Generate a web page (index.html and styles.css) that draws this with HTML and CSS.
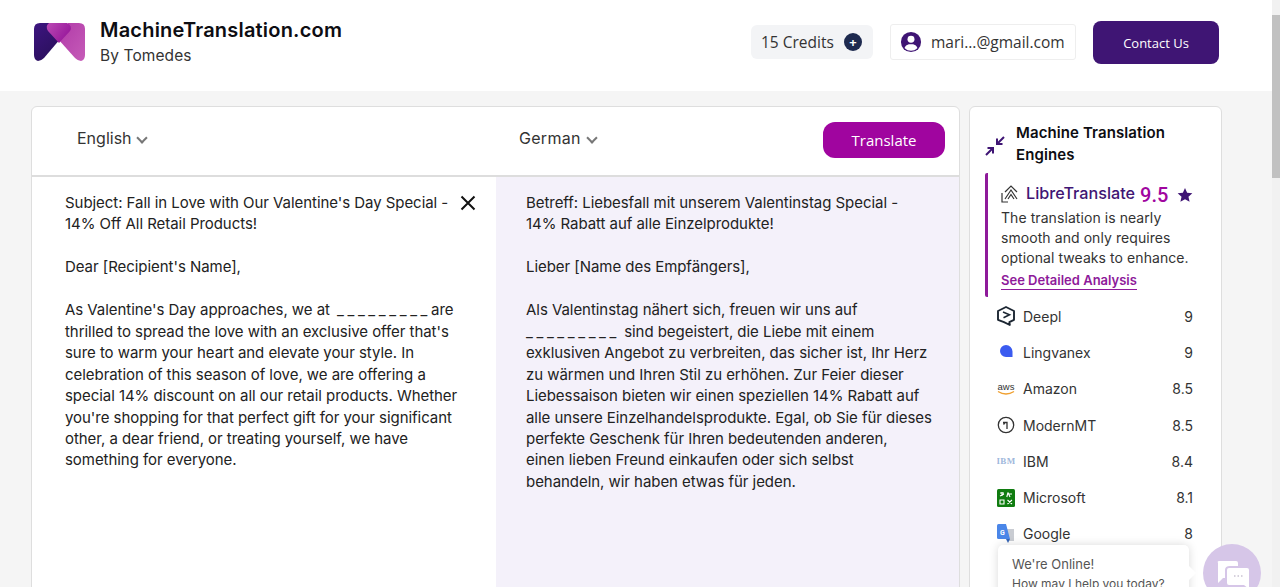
FILE: index.html
```html
<!DOCTYPE html>
<html lang="en">
<head>
  <meta charset="UTF-8">
  <title>MachineTranslation.com</title>
  <link rel="stylesheet" href="styles.css">
</head>
<body>
  <div class="page">
    <header class="topbar">
      <div class="brand">
        <svg class="logo" viewBox="0 0 51 38" width="51" height="38">
          <defs>
            <linearGradient id="logoDark" x1="0" y1="0" x2="0.6" y2="1">
              <stop offset="0" stop-color="#3d1580"/>
              <stop offset="1" stop-color="#2a0f5c"/>
            </linearGradient>
            <linearGradient id="logoPink" x1="0" y1="0" x2="1" y2="1">
              <stop offset="0" stop-color="#b03aa8"/>
              <stop offset="1" stop-color="#c65cb8"/>
            </linearGradient>
            <linearGradient id="logoHeart" x1="0" y1="0" x2="1" y2="0.6">
              <stop offset="0" stop-color="#bb4ab4"/>
              <stop offset="1" stop-color="#96169a"/>
            </linearGradient>
          </defs>
          <path d="M6 0H16L27 15L10 35Q7 38 4 38Q0 37 0 32V6Q0 0 6 0Z" fill="url(#logoDark)"/>
          <path d="M34 0H45Q51 0 51 6V32Q51 37 47 38Q44 38 41 35L24 16Z" fill="url(#logoPink)"/>
          <path d="M15 0H33Q39 3 36 8L25 20L14 8Q11 3 15 0Z" fill="url(#logoHeart)"/>
        </svg>
        <div class="brand-text">
          <div class="brand-name">MachineTranslation.com</div>
          <div class="brand-by">By Tomedes</div>
        </div>
      </div>
      <div class="account">
        <div class="credits">
          <span>15 Credits</span>
          <span class="credits-plus">+</span>
        </div>
        <div class="user">
          <svg viewBox="0 0 24 24" width="22" height="22">
            <circle cx="12" cy="12" r="11" fill="#3f1574"/>
            <circle cx="12" cy="9" r="3.8" fill="#fff"/>
            <path d="M5 18.5C6.5 15 9 14.5 12 14.5S17.5 15 19 18.5C17 20.8 14.5 21.5 12 21.5S7 20.8 5 18.5Z" fill="#fff"/>
          </svg>
          <span>mari...@gmail.com</span>
        </div>
        <button class="contact">Contact Us</button>
      </div>
    </header>

    <main class="content">
      <section class="translator">
        <div class="toolbar">
          <div class="lang-from">English <span class="chevron"></span></div>
          <div class="lang-to">German <span class="chevron"></span></div>
          <button class="translate">Translate</button>
        </div>
        <div class="panels">
          <div class="panel source">
            <p>Subject: Fall in Love with Our Valentine's Day Special -<br>14% Off All Retail Products!</p>
            <p>Dear [Recipient's Name],</p>
            <p>As Valentine's Day approaches, we at <span class="blank">_________</span>are<br>thrilled to spread the love with an exclusive offer that's<br>sure to warm your heart and elevate your style. In<br>celebration of this season of love, we are offering a<br>special 14% discount on all our retail products. Whether<br>you're shopping for that perfect gift for your significant<br>other, a dear friend, or treating yourself, we have<br>something for everyone.</p>
            <svg class="clear" viewBox="0 0 16 16" width="16" height="16">
              <path d="M1.5 1.5L14.5 14.5M14.5 1.5L1.5 14.5" stroke="#111" stroke-width="2" fill="none"/>
            </svg>
          </div>
          <div class="panel target">
            <p>Betreff: Liebesfall mit unserem Valentinstag Special -<br>14% Rabatt auf alle Einzelprodukte!</p>
            <p>Lieber [Name des Empfängers],</p>
            <p>Als Valentinstag nähert sich, freuen wir uns auf<br><span class="blank">_________</span> sind begeistert, die Liebe mit einem<br>exklusiven Angebot zu verbreiten, das sicher ist, Ihr Herz<br>zu wärmen und Ihren Stil zu erhöhen. Zur Feier dieser<br>Liebessaison bieten wir einen speziellen 14% Rabatt auf<br>alle unsere Einzelhandelsprodukte. Egal, ob Sie für dieses<br>perfekte Geschenk für Ihren bedeutenden anderen,<br>einen lieben Freund einkaufen oder sich selbst<br>behandeln, wir haben etwas für jeden.</p>
          </div>
        </div>
      </section>

      <aside class="engines">
        <div class="engines-head">
          <svg viewBox="0 0 20 20" width="20" height="20">
            <path d="M19 1L12 8M12 2.5V8H17.5M1 19L8 12M2.5 12H8V17.5" stroke="#3f1574" stroke-width="2" fill="none"/>
          </svg>
          <h2>Machine Translation<br>Engines</h2>
        </div>
        <div class="best">
          <div class="best-top">
            <svg viewBox="0 0 18 18" width="18" height="18">
              <path d="M1 8V17H7M4 14L10 5L16 14M7 14L10 9.5L13 14M4 7L10 1L16 7" stroke="#333" stroke-width="1.2" fill="none"/>
            </svg>
            <span class="best-name">LibreTranslate</span>
            <span class="best-score">9.5</span>
            <svg class="star" viewBox="0 0 24 24" width="16" height="16">
              <path d="M12 1.5L15.2 8.6L23 9.4L17.2 14.6L18.9 22.3L12 18.3L5.1 22.3L6.8 14.6L1 9.4L8.8 8.6Z" fill="#3f1574"/>
            </svg>
          </div>
          <p>The translation is nearly<br>smooth and only requires<br>optional tweaks to enhance.</p>
          <a class="analysis" href="#">See Detailed Analysis</a>
        </div>
        <ul class="engine-list">
          <li>
            <svg viewBox="0 0 18 20" width="18" height="20">
              <path d="M9 1L17 5V13.8L12.4 16.2L12.8 19L7 16.2L1 13.8V5Z" stroke="#1d2733" stroke-width="1.9" fill="none" stroke-linejoin="round"/>
              <path d="M6 6L12.5 8.8L6.5 11.8" stroke="#1d2733" stroke-width="1.6" fill="none"/>
            </svg>
            <span class="engine-name">Deepl</span><span class="engine-score">9</span>
          </li>
          <li>
            <svg viewBox="0 0 18 18" width="18" height="18">
              <path d="M9 2A6.5 6.5 0 0 1 15.5 8.5V14H9A6 6 0 0 1 9 2Z" fill="#3b5bf0"/>
            </svg>
            <span class="engine-name">Lingvanex</span><span class="engine-score">9</span>
          </li>
          <li>
            <svg viewBox="0 0 18 18" width="18" height="18">
              <text x="9" y="9.5" text-anchor="middle" class="aws-text">aws</text>
              <path d="M1 11.5Q9 16.5 17 11.5" stroke="#f0a030" stroke-width="1.4" fill="none"/>
            </svg>
            <span class="engine-name">Amazon</span><span class="engine-score">8.5</span>
          </li>
          <li>
            <svg viewBox="0 0 18 18" width="18" height="18">
              <circle cx="9" cy="9" r="7.7" stroke="#333" stroke-width="1.3" fill="none"/>
              <path d="M6 6.5H10V13M8 6.5L6.5 8.5" stroke="#333" stroke-width="1.3" fill="none"/>
            </svg>
            <span class="engine-name">ModernMT</span><span class="engine-score">8.5</span>
          </li>
          <li>
            <svg viewBox="0 0 18 18" width="18" height="18">
              <text x="9" y="12" text-anchor="middle" class="ibm-text">IBM</text>
            </svg>
            <span class="engine-name">IBM</span><span class="engine-score">8.4</span>
          </li>
          <li>
            <svg viewBox="0 0 18 18" width="18" height="18">
              <rect width="18" height="18" rx="1.5" fill="#107c10"/>
              <path d="M3 4H7M5 3V7M3 7L7 5M11 3.5L9.8 8M11 3.5L13 8M11 5H15M3 11H7V15H3ZM10.5 11L15 15M15 11L10.5 15" stroke="#fff" stroke-width="1.1" fill="none"/>
            </svg>
            <span class="engine-name">Microsoft</span><span class="engine-score">8.1</span>
          </li>
          <li>
            <svg viewBox="0 0 18 20" width="18" height="20">
              <path d="M9 5H17V17H11Z" fill="#c9ccd2"/>
              <path d="M1.5 0H9L13 15H1.5Q0 15 0 13.5V1.5Q0 0 1.5 0Z" fill="#4a86e8"/>
              <path d="M9 15H13L11 19Z" fill="#3465b8"/>
              <text x="5.5" y="10.5" text-anchor="middle" class="g-text">G</text>
            </svg>
            <span class="engine-name">Google</span><span class="engine-score">8</span>
          </li>
        </ul>
      </aside>
    </main>
  </div>
  <div class="scrollbar"><div class="scroll-thumb"></div></div>

  <div class="chat-popup">
    <div class="chat-title">We're Online!</div>
    <div class="chat-sub">How may I help you today?</div>
  </div>
  <div class="chat-button">
    <svg viewBox="0 0 34 30" width="34" height="30">
      <path d="M3 1H20Q22 1 22 3V6H14Q9 6 9 10V18H7L2 23V3Q1 1 3 1Z" fill="#fff"/>
      <path d="M13 8H31Q33 8 33 10V24L33 29L28 25H13Q11 25 11 23V10Q11 8 13 8Z" fill="#fff"/>
      <path d="M18 16H19.5M21.5 16H23M25 16H26.5" stroke="#c9c2d2" stroke-width="1.4" fill="none"/>
    </svg>
  </div>
</body>
</html>
```

FILE: styles.css
```css
* {
  box-sizing: border-box;
}

body {
  margin: 0;
  height: 587px;
  overflow: hidden;
  display: flex;
  font-family: Inter, sans-serif;
  background-color: #f5f5f5;
  color: #222;
}

.page {
  flex: 1;
  min-width: 0;
}

/* header */
.topbar {
  height: 91px;
  background-color: #fff;
  display: flex;
  justify-content: space-between;
  align-items: center;
  padding: 0 53px 0 34px;
}

.brand {
  display: flex;
  align-items: center;
  gap: 15px;
}

.logo {
  margin-top: -8px;
}

.brand-name {
  font-size: 20px;
  font-weight: 600;
  line-height: 26px;
  letter-spacing: 0.2px;
  color: #0d0d12;
  margin-top: -5px;
}

.brand-by {
  font-size: 15.5px;
  line-height: 26px;
  letter-spacing: 0.1px;
  color: #333;
}

.account {
  display: flex;
  align-items: center;
  font-family: "Open Sans", sans-serif;
  margin-top: -6px;
}

.credits {
  width: 122px;
  height: 34px;
  margin-bottom: 2px;
  background-color: #f3f4f6;
  border-radius: 6px;
  display: flex;
  align-items: center;
  gap: 10px;
  padding-left: 10px;
  font-size: 15.5px;
  color: #333;
}

.credits-plus {
  width: 18px;
  height: 18px;
  border-radius: 50%;
  background-color: #1e2a4f;
  color: #fff;
  font-size: 13px;
  font-weight: 700;
  line-height: 18px;
  text-align: center;
}

.user {
  width: 186px;
  height: 36px;
  margin: 0 0 2px 17px;
  border: 1px solid #eee;
  border-radius: 3px;
  display: flex;
  align-items: center;
  gap: 9px;
  padding-left: 9px;
  font-size: 15.5px;
  color: #333;
}

.contact {
  width: 126px;
  height: 43px;
  margin-left: 17px;
  border: none;
  border-radius: 8px;
  background-color: #3f1574;
  color: #fff;
  font-family: "Open Sans", sans-serif;
  font-size: 13px;
  font-weight: 500;
}

/* main area */
.content {
  display: flex;
  align-items: flex-start;
  gap: 9px;
  padding: 15px 0 0 31px;
}

.translator {
  width: 929px;
  height: 500px;
  background-color: #fff;
  border: 1px solid #dedede;
  border-radius: 6px;
  overflow: hidden;
}

.toolbar {
  height: 70px;
  border-bottom: 2px solid #ddd;
  display: flex;
  align-items: center;
  padding-left: 45px;
  font-size: 16px;
  color: #333;
}

.lang-from {
  width: 442px;
  margin-top: -7px;
}

.lang-to {
  width: 304px;
  margin-top: -7px;
  letter-spacing: 0.3px;
}

.chevron {
  display: inline-block;
  width: 8px;
  height: 8px;
  margin: 0 2px 2px 2px;
  border-right: 2px solid #777;
  border-bottom: 2px solid #777;
  transform: rotate(45deg);
}

.translate {
  width: 122px;
  height: 36px;
  margin-top: -2px;
  border: none;
  border-radius: 12px;
  background-color: #a0059f;
  color: #fff;
  font-family: "Open Sans", sans-serif;
  font-size: 15px;
}

.panels {
  display: flex;
  height: 430px;
}

.panel {
  position: relative;
  padding-top: 15px;
  font-size: 15px;
  line-height: 21.45px;
  letter-spacing: -0.05px;
  color: #222;
  white-space: nowrap;
}

.panel p {
  margin: 0 0 21.45px 0;
}

.blank {
  letter-spacing: 3.6px;
}

.source {
  width: 464px;
  padding-left: 33px;
}

.source .blank {
  margin-left: 3px;
}

.target {
  flex: 1;
  padding-left: 30px;
  background-color: #f4f1fa;
}

.clear {
  position: absolute;
  left: 428px;
  top: 18px;
}

/* engines column */
.engines {
  width: 253px;
  height: 500px;
  background-color: #fff;
  border: 1px solid #dedede;
  border-radius: 6px;
  padding: 15px 15px 0 15px;
}

.engines-head {
  display: flex;
  align-items: center;
  gap: 11px;
}

.engines-head svg {
  margin-top: 3px;
}

.engines-head h2 {
  margin: 0;
  font-size: 15px;
  font-weight: 600;
  line-height: 22px;
  letter-spacing: 0.1px;
  color: #0d0d12;
}

.best {
  margin-top: 7px;
  height: 124px;
  border-left: 3px solid #8e1a9a;
  border-radius: 2px;
  padding: 9px 0 0 13px;
}

.best-top {
  display: flex;
  align-items: center;
  height: 26px;
}

.best-top svg {
  margin-right: 7px;
  margin-bottom: 3px;
}

.best-name {
  margin-bottom: 4px;
  font-size: 16.2px;
  font-weight: 500;
  color: #3f1574;
}

.best-score {
  margin-left: 5px;
  font-family: Roboto, sans-serif;
  font-size: 20px;
  font-weight: 500;
  color: #a0059f;
}

.best-top .star {
  margin: 0 0 0 9px;
}

.best p {
  margin: 0;
  font-size: 14px;
  line-height: 20px;
  letter-spacing: 0.07px;
  color: #333;
}

.analysis {
  display: inline-block;
  margin-top: 3px;
  font-size: 13px;
  font-weight: 600;
  line-height: 18px;
  color: #8e1a9a;
  text-decoration: none;
  border-bottom: 1px solid #8e1a9a;
}

.engine-list {
  list-style: none;
  margin: 1px 0 0 0;
  padding: 0 13px 0 12px;
}

.engine-list li {
  height: 36.3px;
  display: flex;
  align-items: center;
  gap: 8px;
  font-size: 14px;
  color: #333;
}

.engine-list svg {
  flex: none;
  width: 18px;
}

.engine-name {
  flex: 1;
}

.aws-text {
  font-family: "Liberation Sans", sans-serif;
  font-size: 9.5px;
  fill: #333;
}

.ibm-text {
  font-family: "Liberation Serif", serif;
  font-size: 9px;
  font-weight: 700;
  letter-spacing: 0.3px;
  fill: #9fb8dc;
}

.g-text {
  font-family: Roboto, sans-serif;
  font-size: 7px;
  font-weight: 700;
  fill: #fff;
}

/* fake scrollbar of the window */
.scrollbar {
  flex: none;
  width: 8px;
  background-color: #f1f1f1;
  padding-top: 15px;
}

.scroll-thumb {
  height: 163px;
  background-color: #c1c1c1;
}

/* chat widget */
.chat-popup {
  position: absolute;
  left: 998px;
  top: 545px;
  width: 191px;
  height: 60px;
  background-color: #fff;
  border-radius: 5px;
  box-shadow: 0 0 10px rgba(0, 0, 0, 0.15);
  padding: 11px 14px;
  color: #555;
}

.chat-popup::after {
  content: "";
  position: absolute;
  right: -5px;
  top: 23px;
  width: 10px;
  height: 10px;
  background-color: #fff;
  transform: rotate(45deg);
}

.chat-title {
  font-size: 13px;
  line-height: 17px;
}

.chat-sub {
  margin-top: 3px;
  font-size: 12px;
  line-height: 16px;
}

.chat-button {
  position: absolute;
  left: 1203px;
  top: 544px;
  width: 58px;
  height: 58px;
  border-radius: 50%;
  background-color: #d6c6e8;
  padding: 16px 0 0 13px;
}
```
